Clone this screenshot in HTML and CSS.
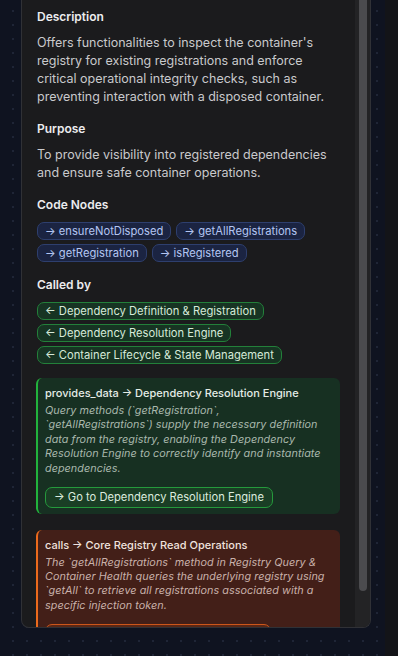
FILE: index.html
```html
<!DOCTYPE html>
<html>
  <head>
    <meta charset="utf-8">
    <meta name="viewport" content="width=device-width,initial-scale=1.0"/>
    <title>Registry Query &amp; Container Health</title>
    <link rel="stylesheet" href="styles.css">
  </head>

  <body>
    <div id='canvas'>
      <div id='panel'>
        <div class='panel-body'>

          <!-- Description -->
          <div class='section'>
            <div class='section-title'>Description</div>
            <p class='section-text'>Offers functionalities to inspect the container's registry for existing registrations and enforce critical operational integrity checks, such as preventing interaction with a disposed container.</p>
          </div>

          <!-- Purpose -->
          <div class='section'>
            <div class='section-title'>Purpose</div>
            <p class='section-text'>To provide visibility into registered dependencies and ensure safe container operations.</p>
          </div>

          <!-- Code nodes -->
          <div class='section'>
            <div class='section-title'>Code Nodes</div>
            <div class='chips'>
              <span class='chip chip-code'>→ ensureNotDisposed</span>
              <span class='chip chip-code'>→ getAllRegistrations</span>
              <span class='chip chip-code'>→ getRegistration</span>
              <span class='chip chip-code'>→ isRegistered</span>
            </div>
          </div>

          <!-- Called by -->
          <div class='section'>
            <div class='section-title'>Called by</div>
            <div class='chips'>
              <span class='chip chip-caller'>← Dependency Definition &amp; Registration</span>
              <span class='chip chip-caller'>← Dependency Resolution Engine</span>
              <span class='chip chip-caller'>← Container Lifecycle &amp; State Management</span>
            </div>
          </div>

          <!-- Edges -->
          <div class='edge edge-data'>
            <div class='edge-title'>provides_data → Dependency Resolution Engine</div>
            <p class='edge-text'>Query methods (`getRegistration`, `getAllRegistrations`) supply the necessary definition data from the registry, enabling the Dependency Resolution Engine to correctly identify and instantiate dependencies.</p>
            <button class='edge-button'>→ Go to Dependency Resolution Engine</button>
          </div>

          <div class='edge edge-calls'>
            <div class='edge-title'>calls → Core Registry Read Operations</div>
            <p class='edge-text'>The `getAllRegistrations` method in Registry Query &amp; Container Health queries the underlying registry using `getAll` to retrieve all registrations associated with a specific injection token.</p>
            <button class='edge-button'>→ Go to Core Registry Read Operations</button>
          </div>

        </div>
        <div class='scroll-track'><div class='scroll-thumb'></div></div>
      </div>
      <div class='side-strip'></div>
    </div>
  </body>
</html>
```

FILE: styles.css
```css
* {
  margin: 0;
  padding: 0;
  box-sizing: border-box;
  font-family: 'Inter', 'Noto Sans', sans-serif;
}
html, body {
  height: 100%;
  overflow: hidden;
}
body {
  background-color: #0f1320;
  background-image: radial-gradient(circle, #1f2536 1px, transparent 1.3px);
  background-size: 14px 14px;
  background-position: 6px 4px;
}
#canvas {
  display: flex;
  height: 100%;
}
#panel {
  display: flex;
  width: 350px;
  height: 628px;
  margin-left: 21px;
  background-color: #1b1b1d;
  border: 1px solid #303136;
  border-top: none;
  border-radius: 0 0 8px 8px;
  overflow: hidden;
}
.panel-body {
  flex: 1;
  padding: 8px 15px 0 14px;
  overflow: hidden;
}
.scroll-track {
  width: 15px;
  display: flex;
  flex-direction: column;
  align-items: center;
  background-color: #232325;
  padding-bottom: 36px;
}
.scroll-thumb {
  flex: 1;
  width: 8px;
  background-color: #4b4b4e;
  border-radius: 0 0 4px 4px;
}
.side-strip {
  margin-left: auto;
  width: 13px;
  background-color: #131418;
}

.section {
  margin-bottom: 14px;
  padding-left: 1px;
}
.section-title {
  font-size: 12px;
  line-height: 18px;
  font-weight: 600;
  color: #ececee;
  margin-bottom: 8px;
}
.section-text {
  font-size: 12.5px;
  line-height: 18px;
  color: #c9c9cc;
}
.chips {
  display: flex;
  flex-wrap: wrap;
  gap: 4px 5px;
}
.chip {
  display: inline-block;
  height: 18px;
  line-height: 16px;
  padding: 0 7px;
  font-size: 11.2px;
  border: 1px solid;
  border-radius: 7px;
}
.chip-code {
  background-color: #1b2442;
  border-color: #2e3f6e;
  color: #b4c6f2;
}
.chip-caller {
  background-color: #173423;
  border-color: #23803a;
  color: #d6ead9;
}

.edge {
  border-left: 2px solid;
  border-radius: 6px;
  padding: 7px 11px 6px 7px;
  margin-bottom: 16px;
}
.edge-title {
  font-size: 11px;
  line-height: 16px;
  font-weight: 500;
  margin-bottom: 3px;
}
.edge-text {
  font-size: 10.8px;
  line-height: 14.4px;
  letter-spacing: 0.05px;
  font-style: italic;
  margin-bottom: 9px;
}
.edge-button {
  height: 21px;
  padding: 0 8px;
  font-size: 11.2px;
  border: 1px solid;
  border-radius: 7px;
}
.edge-data {
  background-color: #173022;
  border-color: #22b23c;
}
.edge-data .edge-title {
  color: #e4ece6;
}
.edge-data .edge-text {
  color: #a9b8ad;
}
.edge-data .edge-button {
  background-color: #1a3e25;
  border-color: #259a3c;
  color: #dcebdf;
}
.edge-calls {
  background-color: #431f18;
  border-color: #ec6a1c;
}
.edge-calls .edge-title {
  color: #f0e2de;
}
.edge-calls .edge-text {
  color: #c9b1aa;
}
.edge-calls .edge-button {
  background-color: #5a2716;
  border-color: #cc561b;
  color: #f0d8cc;
}
```
